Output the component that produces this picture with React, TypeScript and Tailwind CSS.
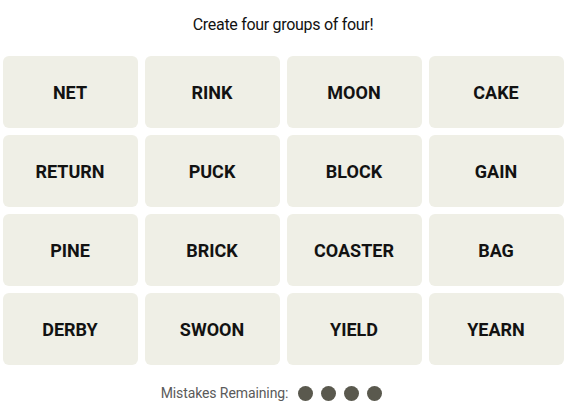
const words = [
  'NET', 'RINK', 'MOON', 'CAKE',
  'RETURN', 'PUCK', 'BLOCK', 'GAIN',
  'PINE', 'BRICK', 'COASTER', 'BAG',
  'DERBY', 'SWOON', 'YIELD', 'YEARN',
]

export default function App() {
  return (
    <div className="w-[566px] h-[407px] bg-white flex flex-col items-center" style={{ fontFamily: 'Roboto, "Liberation Sans", sans-serif' }}>
      <p className="mt-[15px] text-[16px] leading-[20px] tracking-[-0.3px] text-[#121212]">Create four groups of four!</p>

      <div className="mt-[21px] grid grid-cols-4 gap-x-[7px] gap-y-[7px] w-[561px]">
        {words.map((w) => (
          <button
            key={w}
            className="h-[72px] rounded-[6px] bg-[#efefe6] text-[18px] font-bold text-[#121212] flex items-center justify-center"
          >
            {w}
          </button>
        ))}
      </div>

      {/* mistakes row - 5th dot slot is empty, keeps it off-centre like the original */}
      <div className="mt-[18px] flex items-center">
        <span className="text-[14px] text-[#5a5a5a] tracking-[-0.1px]">Mistakes Remaining:</span>
        <div className="flex gap-[8px] ml-[10px]">
          <span className="w-[15px] h-[15px] rounded-full bg-[#5a594e]" />
          <span className="w-[15px] h-[15px] rounded-full bg-[#5a594e]" />
          <span className="w-[15px] h-[15px] rounded-full bg-[#5a594e]" />
          <span className="w-[15px] h-[15px] rounded-full bg-[#5a594e]" />
          <span className="w-[15px] h-[15px] rounded-full invisible" />
        </div>
      </div>
    </div>
  )
}
